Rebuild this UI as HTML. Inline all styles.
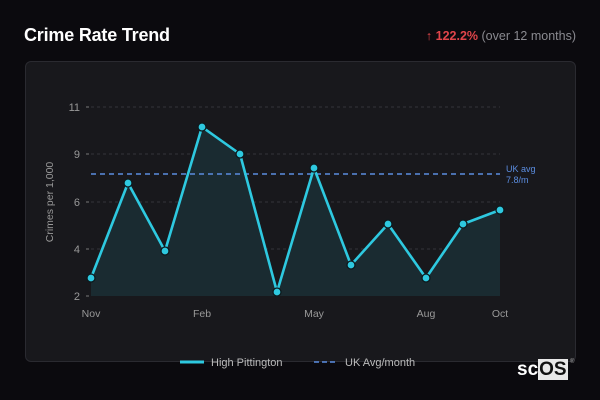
<!DOCTYPE html>
<html><head><style>
body{margin:0;width:600px;height:400px;background:#0b0a0e;font-family:"Liberation Sans","DejaVu Sans",sans-serif;overflow:hidden;position:relative}
.title{position:absolute;left:24px;top:25px;color:#fff;font-weight:bold;font-size:18px;letter-spacing:-0.2px}
.stat{position:absolute;right:24px;top:29px;font-size:12.5px;color:#8a8a90}
.stat b{color:#e0454a}
.card{position:absolute;left:25px;top:61px;width:549px;height:299px;border:1px solid #2a2a30;border-radius:6px;background:#18181c}
.logo{position:absolute;left:517px;top:359px;font-size:19px;color:#fff;font-weight:bold}
.logo span{background:#e8e8e8;color:#111;padding:0 1px}
</style></head><body>
<div class="title">Crime Rate Trend</div>
<div class="stat"><b>↑ 122.2%</b> (over 12 months)</div>
<div class="card"></div>
<svg width="600" height="400" style="position:absolute;left:0;top:0" font-family="Liberation Sans, DejaVu Sans, sans-serif">
<g stroke="#33333a" stroke-dasharray="3,3" stroke-width="1">
<line x1="91" y1="107" x2="500" y2="107"/><line x1="91" y1="154" x2="500" y2="154"/><line x1="91" y1="202" x2="500" y2="202"/><line x1="91" y1="249" x2="500" y2="249"/>
</g>
<g stroke="#777" stroke-width="1"><line x1="86" y1="107" x2="89" y2="107"/><line x1="86" y1="154" x2="89" y2="154"/><line x1="86" y1="202" x2="89" y2="202"/><line x1="86" y1="249" x2="89" y2="249"/><line x1="86" y1="296" x2="89" y2="296"/></g>
<g fill="#999" font-size="11" text-anchor="end"><text x="80" y="111">11</text><text x="80" y="158">9</text><text x="80" y="206">6</text><text x="80" y="253">4</text><text x="80" y="300">2</text></g>
<text transform="translate(53,202) rotate(-90)" fill="#999" font-size="10.5" text-anchor="middle">Crimes per 1,000</text>
<polygon fill="#1a2b31" points="91,296 91,278 128,183 165,251 202,127 240,154 277,292 314,168 351,265 388,224 426,278 463,224 500,210 500,296"/>
<line x1="91" y1="174" x2="500" y2="174" stroke="#5b8de0" stroke-width="1.5" stroke-dasharray="5,4"/>
<text x="506" y="172" fill="#5b8de0" font-size="9">UK avg</text><text x="506" y="183" fill="#5b8de0" font-size="9">7.8/m</text>
<polyline fill="none" stroke="#2ec9e0" stroke-width="2.6" stroke-linejoin="round" points="91,278 128,183 165,251 202,127 240,154 277,292 314,168 351,265 388,224 426,278 463,224 500,210"/>
<g fill="#2ec9e0" stroke="#0d1a1e" stroke-width="1.3">
<circle cx="91" cy="278" r="4"/><circle cx="128" cy="183" r="4"/><circle cx="165" cy="251" r="4"/><circle cx="202" cy="127" r="4"/><circle cx="240" cy="154" r="4"/><circle cx="277" cy="292" r="4"/><circle cx="314" cy="168" r="4"/><circle cx="351" cy="265" r="4"/><circle cx="388" cy="224" r="4"/><circle cx="426" cy="278" r="4"/><circle cx="463" cy="224" r="4"/><circle cx="500" cy="210" r="4"/>
</g>
<g fill="#999" font-size="10.5" text-anchor="middle"><text x="91" y="317">Nov</text><text x="202" y="317">Feb</text><text x="314" y="317">May</text><text x="426" y="317">Aug</text><text x="500" y="317">Oct</text></g>
<line x1="180" y1="362" x2="204" y2="362" stroke="#2ec9e0" stroke-width="3"/>
<text x="211" y="366" fill="#bbb" font-size="11">High Pittington</text>
<line x1="314" y1="362" x2="338" y2="362" stroke="#5b8de0" stroke-width="1.5" stroke-dasharray="5,3"/>
<text x="345" y="366" fill="#bbb" font-size="11">UK Avg/month</text>
<text x="570" y="363" fill="#aaa" font-size="6">®</text>
</svg>
<div class="logo">sc<span>OS</span></div>
</body></html>
